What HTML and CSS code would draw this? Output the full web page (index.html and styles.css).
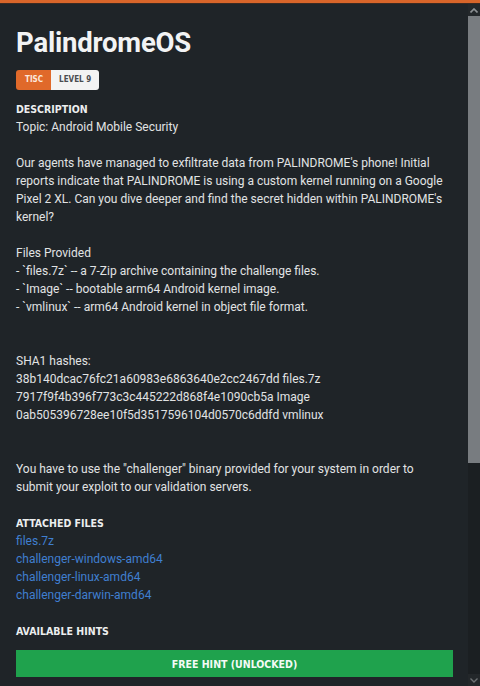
FILE: index.html
```html
<!DOCTYPE html>
<html>
<head>
<meta charset="utf-8">
<link rel="stylesheet" href="styles.css">
</head>
<body>
<div class="frame">
  <main class="content">
    <h1 class="title">PalindromeOS</h1>
    <div class="badge"><span class="badge-cat">TISC</span><span class="badge-level">LEVEL 9</span></div>

    <h2 class="label">DESCRIPTION</h2>
    <div class="desc">
      <p>Topic: Android Mobile Security</p>
      <p>Our agents have managed to exfiltrate data from PALINDROME's phone! Initial reports indicate that PALINDROME is using a custom kernel running on a Google Pixel 2 XL. Can you dive deeper and find the secret hidden within PALINDROME's kernel?</p>
      <p>Files Provided<br>- `files.7z` -- a 7-Zip archive containing the challenge files.<br>- `Image` -- bootable arm64 Android kernel image.<br>- `vmlinux` -- arm64 Android kernel in object file format.</p>
      <p class="gap2">SHA1 hashes:<br>38b140dcac76fc21a60983e6863640e2cc2467dd files.7z<br>7917f9f4b396f773c3c445222d868f4e1090cb5a Image<br>0ab505396728ee10f5d3517596104d0570c6ddfd vmlinux</p>
      <p class="gap2">You have to use the "challenger" binary provided for your system in order to submit your exploit to our validation servers.</p>
    </div>

    <h2 class="label">ATTACHED FILES</h2>
    <ul class="files">
      <li><a href="#">files.7z</a></li>
      <li><a href="#">challenger-windows-amd64</a></li>
      <li><a href="#">challenger-linux-amd64</a></li>
      <li><a href="#">challenger-darwin-amd64</a></li>
    </ul>

    <h2 class="label">AVAILABLE HINTS</h2>
    <button class="hint">FREE HINT (UNLOCKED)</button>
  </main>
  <div class="scrollbar">
    <div class="sb-btn"><svg width="8" height="5" viewBox="0 0 8 5"><path d="M0.5 4.5 L4 1 L7.5 4.5" fill="none" stroke="#8d9194" stroke-width="1.6"/></svg></div>
    <div class="sb-thumb"></div>
    <div class="sb-track"></div>
    <div class="sb-btn"><svg width="8" height="5" viewBox="0 0 8 5"><path d="M0.5 0.5 L4 4 L7.5 0.5" fill="none" stroke="#6d7174" stroke-width="1.4"/></svg></div>
  </div>
</div>
</body>
</html>
```

FILE: styles.css
```css
html, body {
  margin: 0;
  padding: 0;
  height: 100%;
  overflow: hidden;
  background: #1f2428;
}

.frame {
  display: flex;
  height: 686px;
  border-top: 3px solid #d8652a;
  box-sizing: border-box;
  box-shadow: inset 0 1px 0 #3a2a22;
  overflow: hidden;
}

.content {
  flex: 1;
  min-width: 0;
  padding: 23px 15px 0 16px;
  color: #e1e3e4;
  font-family: Roboto, "Liberation Sans", sans-serif;
  font-size: 12px;
  line-height: 18px;
}

.scrollbar {
  width: 12px;
  flex: none;
  display: flex;
  flex-direction: column;
  margin-top: 1px;
  background: #1b1f22;
}
.sb-btn {
  height: 12px;
  flex: none;
  display: flex;
  align-items: center;
  justify-content: center;
  background: #23272a;
}
.sb-thumb {
  height: 447px;
  flex: none;
  background: #787c80;
}
.sb-track {
  flex: 1;
}

.title {
  margin: 0;
  font-family: Roboto, sans-serif;
  font-weight: 700;
  font-size: 27.5px;
  line-height: 34px;
  letter-spacing: -0.2px;
  color: #f2f3f4;
}

.badge {
  display: inline-flex;
  margin-top: 10px;
  height: 20px;
  border-radius: 3px;
  overflow: hidden;
  font-family: "DejaVu Sans Condensed", "DejaVu Sans", sans-serif;
  font-weight: 700;
  font-size: 8px;
  line-height: 20px;
}
.badge-cat {
  background: #e0692a;
  color: #fbe8dc;
  padding: 0 8px 0 9px;
}
.badge-level {
  background: #f3f3f3;
  color: #4a4d50;
  padding: 0 8px 0 8px;
}

.label {
  margin: 10px 0 0;
  font-family: "DejaVu Sans Condensed", "DejaVu Sans", sans-serif;
  font-weight: 700;
  font-size: 10.5px;
  line-height: 18px;
  color: #eceeef;
}

.desc p {
  margin: 0 0 18px;
}
.desc p.gap2 {
  margin-top: 36px;
}

.files {
  list-style: none;
  margin: 0 0 18px;
  padding: 0;
}
.files a {
  color: #3f7fd0;
  text-decoration: none;
}

.hint {
  display: block;
  width: 100%;
  margin-top: 10px;
  height: 27px;
  border: none;
  border-radius: 0;
  background: #1fa24d;
  color: #f4fbf6;
  font-family: "DejaVu Sans Condensed", "DejaVu Sans", sans-serif;
  font-weight: 700;
  font-size: 10.5px;
  padding: 0;
}
```
